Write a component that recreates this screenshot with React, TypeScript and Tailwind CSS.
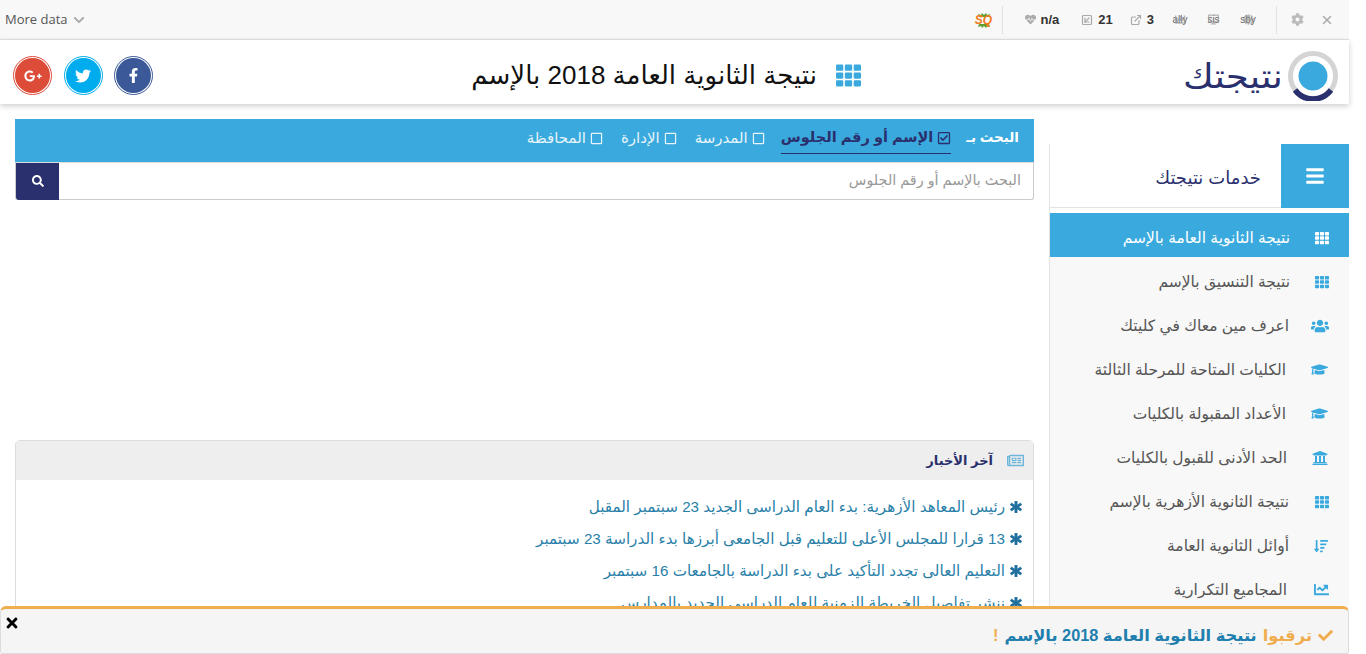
import { FaAsterisk, FaBars, FaChartBar, FaChartLine, FaCheck, FaChevronDown, FaCog, FaDesktop, FaFacebookF, FaGlobe, FaGooglePlusG, FaGraduationCap, FaHeartbeat, FaRegCheckSquare, FaRegNewspaper, FaRegSquare, FaSearch, FaSortAmountDown, FaTh, FaTimes, FaTwitter, FaUniversity, FaUsers } from 'react-icons/fa'
import { ExternalLink, SquareArrowDownLeft, X } from 'lucide-react'
import type { ReactNode } from 'react'

const services: { label: string; icon: ReactNode; box: string; active?: boolean }[] = [
  { label: 'نتيجة الثانوية العامة بالإسم', icon: <FaTh size={14} />, box: 'w-[39px]', active: true },
  { label: 'نتيجة التنسيق بالإسم', icon: <FaTh size={14} />, box: 'w-[39px]' },
  { label: 'اعرف مين معاك في كليتك', icon: <FaUsers size={18} />, box: 'w-[40px]' },
  { label: 'الكليات المتاحة للمرحلة الثالثة', icon: <FaGraduationCap size={17} />, box: 'w-[43px] pr-px' },
  { label: 'الأعداد المقبولة بالكليات', icon: <FaGraduationCap size={17} />, box: 'w-[43px] pr-px' },
  { label: 'الحد الأدنى للقبول بالكليات', icon: <FaUniversity size={16} />, box: 'w-[42px] pr-px' },
  { label: 'نتيجة الثانوية الأزهرية بالإسم', icon: <FaTh size={14} />, box: 'w-[40px]' },
  { label: 'أوائل الثانوية العامة', icon: <FaSortAmountDown size={14} />, box: 'w-[40px] pr-px' },
  { label: 'المجاميع التكرارية', icon: <FaChartLine size={15} />, box: 'w-[42px]' },
]

const news = [
  'رئيس المعاهد الأزهرية: بدء العام الدراسى الجديد 23 سبتمبر المقبل',
  '13 قرارا للمجلس الأعلى للتعليم قبل الجامعى أبرزها بدء الدراسة 23 سبتمبر',
  'التعليم العالى تجدد التأكيد على بدء الدراسة بالجامعات 16 سبتمبر',
  'ننشر تفاصيل الخريطة الزمنية للعام الدراسى الجديد بالمدارس',
]

const searchTabs = ['المدرسة', 'الإدارة', 'المحافظة']

function Social({ color, children }: { color: string; children: ReactNode }) {
  return (
    <div className={`w-[39px] h-[39px] rounded-full border border-current p-px ${color}`}>
      <div className="w-full h-full rounded-full flex items-center justify-center bg-current">
        <span className="text-white flex">{children}</span>
      </div>
    </div>
  )
}

function Stat({ icon, value, className }: { icon: ReactNode; value: string; className: string }) {
  return (
    <div className={`flex items-center gap-[5px] text-[#aaa] ${className}`}>
      {icon}
      <span className="text-[13px] font-bold text-[#333]">{value}</span>
    </div>
  )
}

function Garbled({ text, icon, className }: { text: string; icon: ReactNode; className: string }) {
  return (
    <div className={`relative flex items-center justify-center text-[10px] text-[#666] ${className}`}>
      {text}
      <span className="absolute inset-0 flex items-center justify-center text-[#999] opacity-70">{icon}</span>
    </div>
  )
}

function SqLogo() {
  return (
    <div className="relative w-[16px] h-[18px] flex items-center justify-center mr-[10px]">
      <svg viewBox="0 0 16 18" className="absolute inset-0 w-full h-full text-[#5f9e2e]" fill="currentColor">
        <path d="M2 3l3 1 1-2 2 2 2-2 1 2 3-1-1 3H3zM3 13h10l1 3-3-1-1 2-2-2-2 2-1-2-3 1z" />
      </svg>
      <span className="relative text-[12px] leading-none font-bold italic text-[#f47b20]">SQ</span>
    </div>
  )
}

function LogoRing() {
  return (
    <svg viewBox="0 0 50 50" className="w-[50px] h-[50px]">
      <circle cx="25" cy="25" r="22.5" fill="none" stroke="#d4d4d4" strokeWidth="5" />
      <path d="M7 39 A22.5 22.5 0 0 0 43 39" fill="none" stroke="#2a2f6e" strokeWidth="5.5" />
      <circle cx="25" cy="25" r="14.5" fill="#3aa9dd" />
    </svg>
  )
}

export default function App() {
  return (
    <div className="relative w-[1366px] h-[654px] overflow-hidden bg-white font-['Liberation_Sans','DejaVu_Sans',sans-serif]">
      <div className="w-[1349px]">
        {/* SEOquake toolbar */}
        <div className="h-[40px] flex items-center justify-between bg-[#f8f8f8] border-b border-[#e3e3e3] pl-[5px] pr-[15px]">
          <div className="flex items-center gap-[5px] text-[13px] text-[#555] font-['Open_Sans',sans-serif]">
            More data <FaChevronDown size={12} className="text-[#aaa]" />
          </div>
          <div className="flex items-center">
            <SqLogo />
            <div className="w-px h-[28px] bg-[#e3e3e3] mr-[22px]" />
            <Stat icon={<FaHeartbeat size={11} />} value="n/a" className="mr-[22px]" />
            <Stat icon={<SquareArrowDownLeft size={12} strokeWidth={2.4} />} value="21" className="mr-[17px]" />
            <Stat icon={<ExternalLink size={12} strokeWidth={2.4} />} value="3" className="mr-[18px]" />
            <Garbled text="ally" icon={<FaChartBar size={11} />} className="w-[16px] mr-[17px]" />
            <Garbled text="sis" icon={<FaDesktop size={11} />} className="w-[17px] mr-[18px]" />
            <Garbled text="sby" icon={<FaGlobe size={11} />} className="w-[16px] mr-[20px]" />
            <div className="w-px h-[28px] bg-[#e3e3e3] mr-[14px]" />
            <FaCog size={13} className="text-[#bbb] mr-[16px]" />
            <X size={14} strokeWidth={2.5} className="text-[#aaa]" />
          </div>
        </div>

        {/* Header */}
        <header className="relative z-10 h-[64px] flex items-center justify-between bg-white shadow-[0_2px_6px_rgba(0,0,0,0.2)] pl-[13px] pr-[11px] pt-[7px]">
          <div className="flex gap-[11.5px]">
            <Social color="text-[#dd4b39]"><FaGooglePlusG size={18} /></Social>
            <Social color="text-[#00aced]"><FaTwitter size={16} /></Social>
            <Social color="text-[#3b5998]"><FaFacebookF size={15} /></Social>
          </div>
          <div dir="rtl" className="flex items-center gap-[19px] text-[#111] text-[26px] mr-[13px]">
            <FaTh size={25} className="text-[#3aa9dd]" />
            <span>نتيجة الثانوية العامة 2018 بالإسم</span>
          </div>
          <div className="flex items-center gap-[5px]">
            <span className="text-[34px] leading-none text-[#2a2f6e] scale-x-[1.1] origin-right">نتيجتك</span>
            <LogoRing />
          </div>
        </header>

        <div dir="rtl" className="flex items-start">
          {/* Sidebar */}
          <aside className="w-[300px] mt-[40px] border-l border-[#e3e3e3] shrink-0">
            <div className="flex items-center h-[64px] border-b border-[#e3e3e3]">
              <div className="w-[68px] h-[64px] bg-[#3aa9dd] flex items-center justify-center text-white"><FaBars size={20} /></div>
              <span className="mr-[20px] pt-[6px] text-[18px] text-[#2a2f6e]">خدمات نتيجتك</span>
            </div>
            <ul className="mt-[5px] bg-[#f8f8f8]">
              {services.map((s) => (
                <li key={s.label} className={`h-[44px] flex items-center text-[15.5px] pr-[20px] pt-[5px] ${s.active ? 'bg-[#3aa9dd] text-white' : 'text-[#555]'}`}>
                  <span className={`flex ${s.box} ${s.active ? 'text-white' : 'text-[#3aa9dd]'}`}>{s.icon}</span>
                  <span>{s.label}</span>
                </li>
              ))}
            </ul>
          </aside>

          {/* Main */}
          <main className="w-[1019px] mr-[15px] mt-[15px]">
            <div className="h-[43px] bg-[#3aa9dd] flex items-center pr-[15px] pb-[4px] text-[15px] text-white">
              <b className="ml-[15px] text-[13.5px]">البحث بـ</b>
              <div className="flex items-center gap-1 h-[30px] border-b border-[#2a2f6e] font-bold text-[14.5px] text-[#2a2f6e] ml-[16px]">
                <FaRegCheckSquare size={14} /> الإسم أو رقم الجلوس
              </div>
              <div className="flex gap-[18px]">
                {searchTabs.map((t) => (
                  <div key={t} className="flex items-center gap-1 text-[#e6f4fb]"><FaRegSquare size={13} /> {t}</div>
                ))}
              </div>
            </div>
            <div className="h-[38px] flex items-center justify-between border border-[#ccc] border-t-[#ddd] rounded-b-[3px] pr-[12px]">
              <span className="text-[14.4px] text-[#999]">البحث بالإسم أو رقم الجلوس</span>
              <div className="w-[43px] h-[37px] bg-[#2a2f6e] text-white flex items-center justify-center rounded-bl-[3px]"><FaSearch size={12} /></div>
            </div>

            <section className="mt-[240px] border border-[#ddd] rounded-[5px]">
              <div className="h-[39px] bg-[#eee] rounded-t-[5px] flex items-center pr-[9px] gap-[14px]">
                <FaRegNewspaper size={17} className="text-[#6db6da]" />
                <b className="text-[13px] text-[#2a2f6e]">آخر الأخبار</b>
              </div>
              <ul className="pt-[11px] pr-[11px]">
                {news.map((n) => (
                  <li key={n} className="h-[32px] flex items-center gap-[5px] text-[15.2px] text-[#2a7fa8]">
                    <FaAsterisk size={12} className="text-[#1f6f9c] stroke-current stroke-[40]" /> {n}
                  </li>
                ))}
              </ul>
            </section>
          </main>
        </div>
      </div>

      {/* Fixed notice */}
      <div className="absolute left-0 bottom-0 w-[1349px] h-[48px] bg-[#f5f5f5] border border-t-[3px] border-[#ddd] border-t-[#f0ad4e] rounded-t-[6px] rounded-b-[3px]">
        <div dir="rtl" className="h-full flex items-center pr-[15px] pt-[9px] gap-[6px] text-[16.3px] font-bold">
          <FaCheck size={15} className="text-[#f0ad4e]" />
          <span className="text-[#f0ad4e]">ترقبوا</span>
          <span className="text-[#1f7fae]">نتيجة الثانوية العامة 2018 بالإسم</span>
          <span className="text-[#f0ad4e]">!</span>
        </div>
        <FaTimes size={16} className="absolute left-[3px] top-[6px] text-black" />
      </div>
    </div>
  )
}
